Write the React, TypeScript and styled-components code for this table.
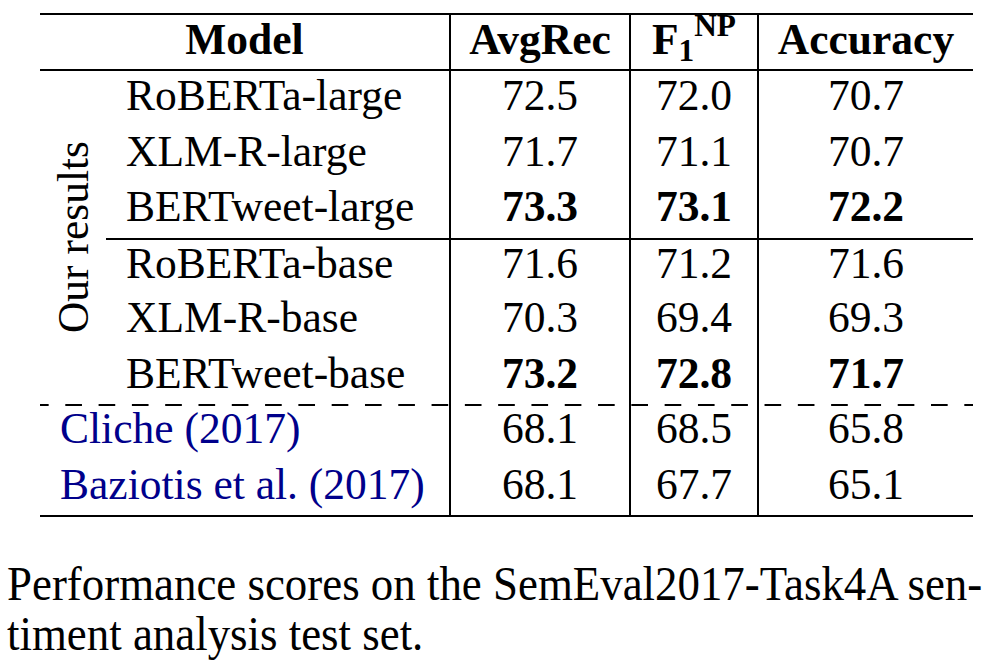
import styled, { createGlobalStyle } from "styled-components";

const GlobalStyle = createGlobalStyle`
  html, body {
    margin: 0;
    padding: 0;
    background: #fff;
  }
  body {
    font-family: "Liberation Serif", "Times New Roman", serif;
    color: #000;
  }
`;

type Row = {
  model: string;
  avgRec: string;
  f1: string;
  acc: string;
  bold?: boolean;
  mid?: boolean;
};

const ours: Row[] = [
  { model: "RoBERTa-large", avgRec: "72.5", f1: "72.0", acc: "70.7" },
  { model: "XLM-R-large", avgRec: "71.7", f1: "71.1", acc: "70.7" },
  { model: "BERTweet-large", avgRec: "73.3", f1: "73.1", acc: "72.2", bold: true },
  { model: "RoBERTa-base", avgRec: "71.6", f1: "71.2", acc: "71.6", mid: true },
  { model: "XLM-R-base", avgRec: "70.3", f1: "69.4", acc: "69.3" },
  { model: "BERTweet-base", avgRec: "73.2", f1: "72.8", acc: "71.7", bold: true },
];

const baselines = [
  { model: "Cliche (2017)", avgRec: "68.1", f1: "68.5", acc: "65.8" },
  { model: "Baziotis et al. (2017)", avgRec: "68.1", f1: "67.7", acc: "65.1" },
];

// left edge of each number column, from the table's left edge (for the dash phase)
const colLeft = [409, 589, 717];

function App() {
  return (
    <>
      <GlobalStyle />
      <Page>
        <Table>
          <HeadCell $span={2}>Model</HeadCell>
          <HeadCell $divider>AvgRec</HeadCell>
          <HeadCell $divider>
            <span>
              F<Sub>1</Sub>
              <Sup>NP</Sup>
            </span>
          </HeadCell>
          <HeadCell $divider>Accuracy</HeadCell>

          <GroupCell>
            <Rotated>Our results</Rotated>
          </GroupCell>

          {ours.map((r) => (
            <>
              <Cell key={r.model} $left $mid={r.mid}>{r.model}</Cell>
              <Cell $divider $mid={r.mid} $bold={r.bold}>{r.avgRec}</Cell>
              <Cell $divider $mid={r.mid} $bold={r.bold}>{r.f1}</Cell>
              <Cell $divider $mid={r.mid} $bold={r.bold}>{r.acc}</Cell>
            </>
          ))}

          {baselines.map((r, i) => (
            <>
              <Cell key={r.model} $left $span={2} $dashed={i === 0} $dashX={0} $cite>
                {r.model}
              </Cell>
              <Cell $divider $dashed={i === 0} $dashX={colLeft[0]}>{r.avgRec}</Cell>
              <Cell $divider $dashed={i === 0} $dashX={colLeft[1]}>{r.f1}</Cell>
              <Cell $divider $dashed={i === 0} $dashX={colLeft[2]}>{r.acc}</Cell>
            </>
          ))}
        </Table>

        <Caption>
          <Line>Performance scores on the SemEval2017-Task4A sen-</Line>
          <Line>timent analysis test set.</Line>
        </Caption>
      </Page>
    </>
  );
}

export default App;

const Page = styled.div`
  width: 1000px;
  height: 664px;
  overflow: hidden;
  padding-top: 13px;
  box-sizing: border-box;
`;

const Table = styled.div`
  display: grid;
  grid-template-columns: 66px 343px 180px 128px 216px;
  grid-template-rows: 56px repeat(8, 55.5px);
  width: 933px;
  margin-left: 40px;
  border-top: 2px solid #000;
  border-bottom: 2px solid #000;
  font-size: 43.5px;
  line-height: 1.15;
`;

const Cell = styled.div<{
  $left?: boolean;
  $divider?: boolean;
  $mid?: boolean;
  $dashed?: boolean;
  $dashX?: number;
  $bold?: boolean;
  $cite?: boolean;
  $span?: number;
}>`
  display: flex;
  align-items: center;
  justify-content: ${(p) => (p.$left ? "flex-start" : "center")};
  grid-column: span ${(p) => p.$span || 1};
  box-sizing: border-box;
  padding: 0 0 7px ${(p) => (p.$left ? "20px" : "0")};
  border-left: ${(p) => (p.$divider ? "2px solid #000" : "none")};
  border-top: ${(p) => (p.$mid ? "2px solid #000" : "none")};
  font-weight: ${(p) => (p.$bold ? 700 : 400)};
  color: ${(p) => (p.$cite ? "#00008b" : "#000")};
  white-space: nowrap;
  background-image: ${(p) =>
    p.$dashed ? "linear-gradient(to right, #000 0 17px, transparent 17px 33.3px)" : "none"};
  background-size: 33.3px 2px;
  background-repeat: repeat-x;
  background-origin: border-box;
  background-position: ${(p) => -8 - (p.$dashX || 0)}px 0;
`;

const HeadCell = styled(Cell)`
  font-weight: 700;
  border-bottom: 2px solid #000;
`;

const Sub = styled.span`
  font-size: 0.72em;
  line-height: 1;
  vertical-align: -7px;
`;

const Sup = styled.span`
  font-size: 0.72em;
  line-height: 1;
  vertical-align: 18px;
`;

const GroupCell = styled.div`
  grid-column: 1;
  grid-row: 2 / span 6;
  display: flex;
  align-items: center;
  justify-content: center;
`;

const Rotated = styled.span`
  writing-mode: vertical-rl;
  transform: rotate(180deg);
  white-space: nowrap;
`;

const Caption = styled.div`
  margin: 42px 0 0 7px;
  font-size: 48px;
  line-height: 50px;
  transform: scaleX(0.935);
  transform-origin: left top;
`;

const Line = styled.div`
  white-space: nowrap;
`;
